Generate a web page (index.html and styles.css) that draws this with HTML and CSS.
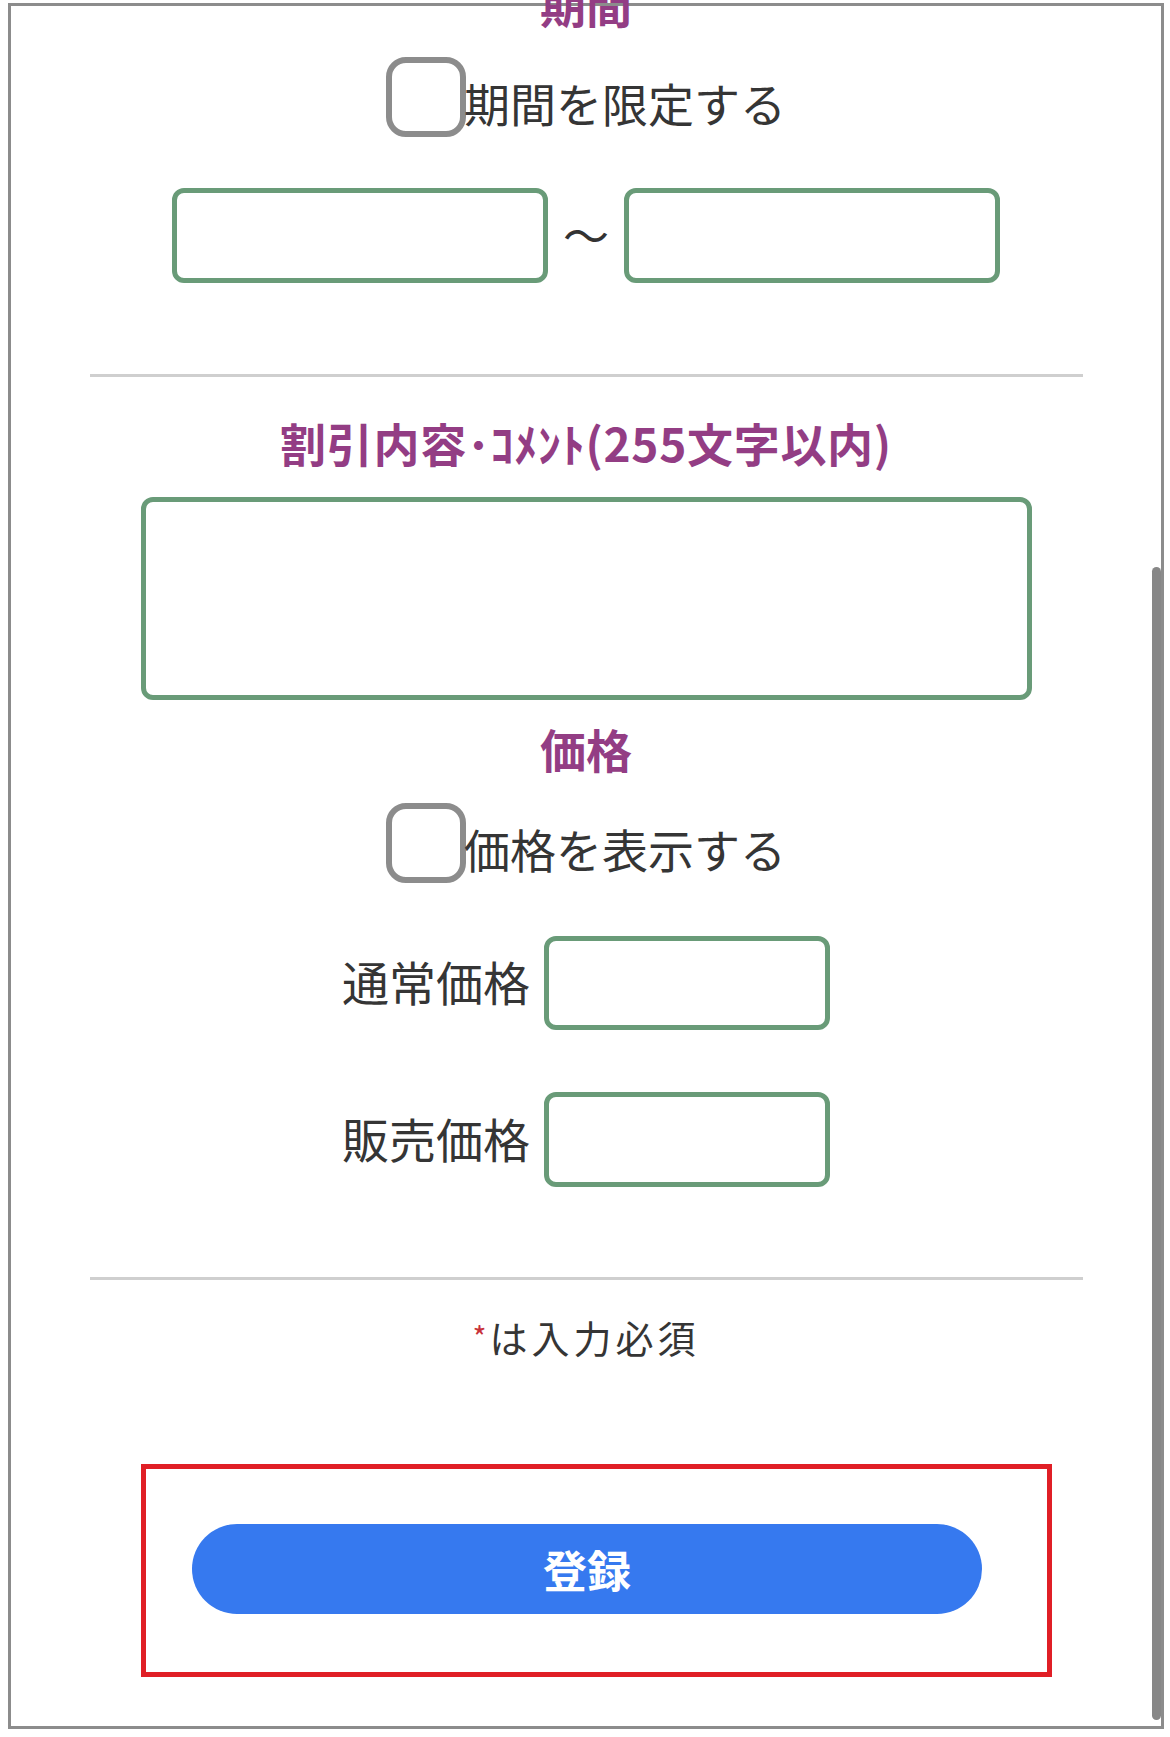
FILE: index.html
```html
<!DOCTYPE html>
<html lang="ja">
<head>
<meta charset="utf-8">
<title>割引登録</title>
<link rel="stylesheet" href="styles.css">
</head>
<body>
<div class="frame">
  <h2 class="title title-top">期間</h2>
  <label class="check-row check-row-1">
    <input type="checkbox" class="check">
    <span class="check-label">期間を限定する</span>
  </label>
  <div class="date-row">
    <input type="text" class="field date-field">
    <span class="tilde">〜</span>
    <input type="text" class="field date-field">
  </div>
  <div class="divider divider-1"></div>

  <h2 class="title title-comment">割引内容･ｺﾒﾝﾄ(255文字以内)</h2>
  <textarea class="field comment-field"></textarea>

  <h2 class="title title-price">価格</h2>
  <label class="check-row check-row-2">
    <input type="checkbox" class="check">
    <span class="check-label">価格を表示する</span>
  </label>
  <div class="price-row price-row-1">
    <span class="price-label">通常価格</span>
    <input type="text" class="field price-field">
  </div>
  <div class="price-row price-row-2">
    <span class="price-label">販売価格</span>
    <input type="text" class="field price-field">
  </div>
  <div class="divider divider-2"></div>

  <p class="required"><span class="asterisk">*</span>は入力必須</p>

  <div class="highlight">
    <button type="button" class="submit">登録</button>
  </div>

  <div class="scrollbar"></div>
</div>
</body>
</html>
```
FILE: styles.css
```css
html, body {
  margin: 0;
  padding: 0;
  background: #ffffff;
}

body {
  font-family: "Noto Sans CJK JP", "Noto Sans", sans-serif;
  color: #353535;
}

.frame {
  position: relative;
  box-sizing: border-box;
  width: 1156px;
  height: 1726px;
  margin: 3px 0 0 8px;
  border: 3px solid #8c8c8c;
  background: transparent;
}

.title {
  margin: 0;
  text-align: center;
  font-size: 46px;
  line-height: 56px;
  font-weight: 700;
  color: #933d84;
  position: relative;
}

.title-top {
  margin-top: -31px;
}

.title-comment {
  margin-top: 37px;
  letter-spacing: 0.7px;
}

.check-row {
  display: flex;
  justify-content: center;
  align-items: flex-start;
}

.check-row-1 {
  margin-top: 26px;
}

.check-row-2 {
  margin-top: 27px;
}

.check {
  appearance: none;
  -webkit-appearance: none;
  box-sizing: border-box;
  width: 80px;
  height: 80px;
  margin: 0;
  border: 6px solid #8c8c8c;
  border-radius: 20px;
  background: #ffffff;
  flex: none;
}

.check-label {
  font-size: 46px;
  line-height: 56px;
  padding-top: 17px;
  color: #353535;
  margin-left: -2px;
}

.date-row {
  margin-top: 51px;
  display: flex;
  justify-content: center;
  align-items: center;
}

.field {
  box-sizing: border-box;
  margin: 0;
  border: 5px solid #699b78;
  border-radius: 12px;
  background: #ffffff;
  font-family: inherit;
  font-size: 40px;
  padding: 0 14px;
  outline: none;
}

.date-field {
  width: 376px;
  height: 95px;
}

.tilde {
  font-size: 46px;
  line-height: 56px;
  margin: -6px 15px 0;
  color: #333333;
}

.divider {
  width: 993px;
  height: 3px;
  background: #cfcfcf;
  margin-left: auto;
  margin-right: auto;
}

.divider-1 {
  margin-top: 91px;
}

.comment-field {
  display: block;
  width: 891px;
  height: 203px;
  margin: 27px auto 0;
  resize: none;
}

.title-price {
  margin-top: 20px;
}

.price-row {
  display: flex;
  justify-content: center;
  align-items: center;
  gap: 14px;
}

.price-row-1 {
  margin-top: 53px;
}

.price-row-2 {
  margin-top: 62px;
}

.price-label {
  font-size: 47px;
  line-height: 56px;
  color: #353535;
  margin-top: -4px;
}

.price-field {
  width: 286px;
  height: 94px;
}

.price-row-2 .price-field {
  height: 95px;
}

.divider-2 {
  margin-top: 90px;
}

.required {
  margin: 32px 0 0;
  text-align: center;
  font-size: 38px;
  line-height: 48px;
  letter-spacing: 4px;
  color: #353535;
}

.asterisk {
  color: #c8323a;
  font-size: 30px;
  letter-spacing: 0;
  margin-right: 3px;
  vertical-align: 4px;
}

.highlight {
  box-sizing: border-box;
  width: 911px;
  margin: 103px 0 0 130px;
  padding: 55px 0 58px 46px;
  border: 5px solid #e01f26;
}

.submit {
  display: block;
  width: 790px;
  height: 90px;
  margin: 0;
  padding: 0;
  border: none;
  border-radius: 45px;
  background: #3679ef;
  color: #ffffff;
  font-family: inherit;
  font-size: 44px;
  font-weight: 700;
  line-height: 90px;
}

.scrollbar {
  position: absolute;
  left: 1141px;
  top: 561px;
  width: 9px;
  height: 1153px;
  border-radius: 5px;
  background: #878787;
}
```
